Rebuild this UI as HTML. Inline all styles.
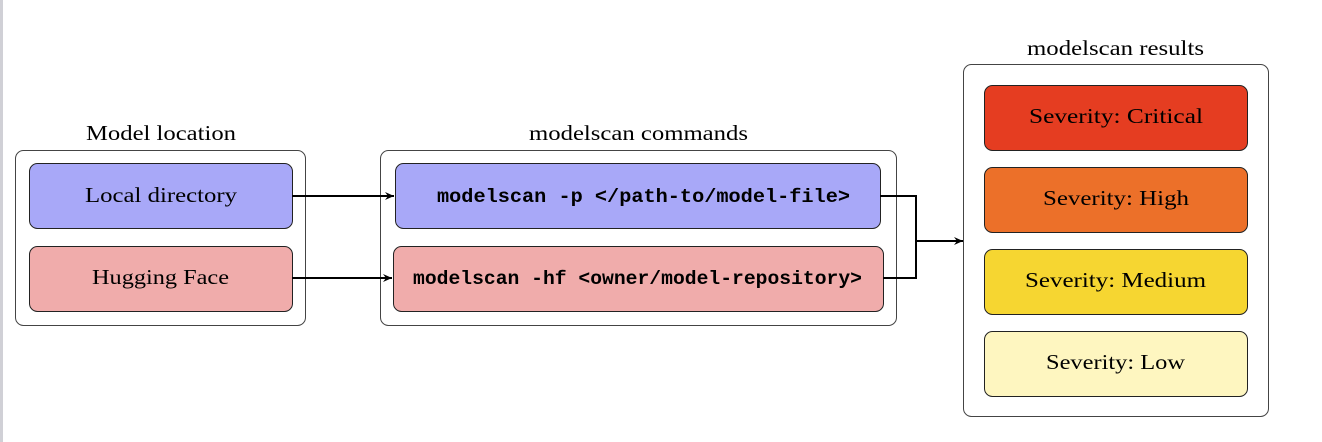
<!DOCTYPE html>
<html><head><meta charset="utf-8"><style>
html,body{margin:0;padding:0;background:#fff;width:1322px;height:442px;overflow:hidden}
.s{font-family:"Liberation Serif",serif;font-size:21px;fill:#000}
.m{font-family:"Liberation Mono",monospace;font-size:19px;font-weight:bold;fill:#000}
</style></head><body>
<svg width="1322" height="442" xmlns="http://www.w3.org/2000/svg">
<defs><marker id="a" markerWidth="10" markerHeight="8" refX="9" refY="4" orient="auto" markerUnits="userSpaceOnUse"><path d="M0,0 L9,4 L0,8 L3,4 Z" fill="#000"/></marker></defs>
<rect x="0" y="0" width="3" height="442" fill="#d0d0d6"/>
<g stroke="#444" stroke-width="1" fill="none">
<rect x="15.5" y="150.5" width="290" height="175" rx="8"/>
<rect x="380.5" y="150.5" width="516" height="175" rx="8"/>
<rect x="963.5" y="64.5" width="305" height="352" rx="8"/>
</g>
<g stroke="#222" stroke-width="1">
<rect x="29.5" y="163.5" width="263" height="65" rx="8" fill="#a8a8f8"/>
<rect x="29.5" y="246.5" width="263" height="65" rx="8" fill="#f0acab"/>
<rect x="395.5" y="163.5" width="485" height="65" rx="8" fill="#a8a8f8"/>
<rect x="393.5" y="246.5" width="490" height="65" rx="8" fill="#f0acab"/>
<rect x="984.5" y="85.5" width="263" height="65" rx="8" fill="#e53d21"/>
<rect x="984.5" y="167.5" width="263" height="65" rx="8" fill="#ec7029"/>
<rect x="984.5" y="249.5" width="263" height="65" rx="8" fill="#f6d631"/>
<rect x="984.5" y="331.5" width="263" height="65" rx="8" fill="#fef6c0"/>
</g>
<g stroke="#000" stroke-width="2" fill="none">
<line x1="292" y1="196" x2="394" y2="196" marker-end="url(#a)"/>
<line x1="292" y1="278" x2="392" y2="278" marker-end="url(#a)"/>
<polyline points="880,196 916,196 916,278 883,278"/>
<line x1="916" y1="241" x2="963" y2="241" marker-end="url(#a)"/>
</g>
<g class="s" lengthAdjust="spacingAndGlyphs">
<text x="86" y="140" textLength="150" lengthAdjust="spacingAndGlyphs">Model location</text>
<text x="529" y="140" textLength="219" lengthAdjust="spacingAndGlyphs">modelscan commands</text>
<text x="1027" y="55" textLength="177" lengthAdjust="spacingAndGlyphs">modelscan results</text>
<text x="85" y="202" textLength="152" lengthAdjust="spacingAndGlyphs">Local directory</text>
<text x="92" y="284" textLength="137" lengthAdjust="spacingAndGlyphs">Hugging Face</text>
<text x="1029" y="123" textLength="174" lengthAdjust="spacingAndGlyphs">Severity: Critical</text>
<text x="1043" y="205" textLength="146" lengthAdjust="spacingAndGlyphs">Severity: High</text>
<text x="1025" y="287" textLength="181" lengthAdjust="spacingAndGlyphs">Severity: Medium</text>
<text x="1046" y="369" textLength="139" lengthAdjust="spacingAndGlyphs">Severity: Low</text>
</g>
<g class="m">
<text x="437" y="202" textLength="413" lengthAdjust="spacingAndGlyphs">modelscan -p &lt;/path-to/model-file&gt;</text>
<text x="413" y="284" textLength="449" lengthAdjust="spacingAndGlyphs">modelscan -hf &lt;owner/model-repository&gt;</text>
</g>
</svg>
</body></html>
